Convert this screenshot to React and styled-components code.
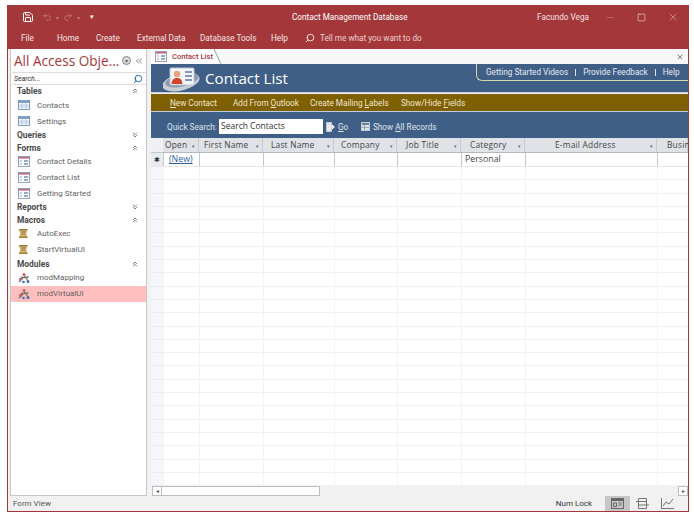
import React from "react";
import styled, { createGlobalStyle } from "styled-components";
import { Minus, Square, X, Redo2, Undo2, Search, ChevronsDown, ChevronsUp, ChevronsLeft, Save } from "lucide-react";

const columns = [
  { name: "Open", width: 36, left: 2 },
  { name: "First Name", width: 64, left: 5 },
  { name: "Last Name", width: 71, left: 8 },
  { name: "Company", width: 63, left: 7 },
  { name: "Job Title", width: 64, left: 9 },
  { name: "Category", width: 64, left: 9 },
  { name: "E-mail Address", width: 132, left: 30 },
  { name: "Busin", width: 31, left: 10, cut: true },
];

const groups = [
  { title: "Tables", open: true, icon: "table", items: ["Contacts", "Settings"] },
  { title: "Queries" },
  { title: "Forms", open: true, icon: "form", items: ["Contact Details", "Contact List", "Getting Started"] },
  { title: "Reports" },
  { title: "Macros", open: true, icon: "macro", items: ["AutoExec", "StartVirtualUI"] },
  { title: "Modules", open: true, icon: "module", items: ["modMapping", "modVirtualUI"] },
];

const ObjectIcon = ({ type }) => {
  if (type === "table") {
    return (
      <svg width="12" height="10" viewBox="0 0 12 10">
        <rect x="0.5" y="0.5" width="11" height="9" fill="#fff" stroke="#7f9cbf" />
        <rect x="1" y="1" width="10" height="2" fill="#7fa2cc" />
        <path d="M1 5h10M1 7h10M4 3v6M8 3v6" stroke="#a3bbd6" strokeWidth="0.8" />
      </svg>
    );
  }
  if (type === "form") {
    return (
      <svg width="12" height="11" viewBox="0 0 12 11">
        <rect x="0.5" y="0.5" width="11" height="10" fill="#fff" stroke="#9a9cb0" />
        <rect x="1" y="1" width="10" height="1.6" fill="#c46a8c" />
        <path d="M2 5h2M2 8h2" stroke="#8aa5c4" strokeWidth="1.2" />
        <rect x="6" y="4" width="4" height="2" fill="#8fabcb" />
        <rect x="6" y="7" width="4" height="2" fill="#8fabcb" />
      </svg>
    );
  }
  if (type === "macro") {
    return (
      <svg width="11" height="11" viewBox="0 0 11 11">
        <path d="M1 1h8.500l-1 4.500 1 4.500H1l1-4.500z" fill="#d4b271" />
        <path d="M1 1h8.500v1.500H1zM1 8.500h8.500V10H1z" fill="#a37f3e" />
        <path d="M3.500 4h4M3.500 6h3.500" stroke="#8c6c34" strokeWidth="0.8" />
      </svg>
    );
  }
  return (
    <svg width="12" height="12" viewBox="0 0 12 12">
      <path d="M1 10l4-4M6 3l4 6M3 5l6 1" stroke="#666" strokeWidth="1.1" fill="none" />
      <circle cx="6" cy="2.500" r="1.500" fill="#c9625f" />
      <circle cx="2.500" cy="7" r="1.500" fill="#c9625f" />
      <circle cx="10" cy="9.500" r="1.500" fill="#3f74b5" />
      <circle cx="5.500" cy="10" r="1.300" fill="#3f74b5" />
      <circle cx="9.500" cy="5" r="1.200" fill="#888" />
    </svg>
  );
};

const ContactLogo = () => (
  <svg width="38" height="25" viewBox="0 0 38 25">
    <ellipse cx="18" cy="15" rx="19" ry="8.500" transform="rotate(-14 18 15)" fill="#c9ced6" />
    <ellipse cx="19" cy="13" rx="17" ry="6.500" transform="rotate(-14 19 13)" fill="#8d99aa" />
    <rect x="7" y="1" width="24" height="17" rx="1" fill="#f4f6fa" stroke="#b9c4d4" />
    <circle cx="14" cy="7" r="3.200" fill="#e8a27c" />
    <path d="M8.500 17c.4-4.500 2.600-6 5.500-6s5.100 1.500 5.500 6z" fill="#d2452c" />
    <path d="M22 5h7M22 9h7M22 13h7" stroke="#5a7aa3" strokeWidth="1.500" />
  </svg>
);

const GoIcon = () => (
  <svg width="9" height="10" viewBox="0 0 9 10">
    <path d="M.5.500h5v9h-5z" fill="#e4e7ec" stroke="#c3c9d2" />
    <path d="M3 5h5M6 3l2 2-2 2" fill="none" stroke="#fff" strokeWidth="1.100" />
  </svg>
);

const RecordsIcon = () => (
  <svg width="9" height="9" viewBox="0 0 9 9">
    <rect x="0.5" y="0.500" width="8" height="8" fill="#dfe3e9" stroke="#c3c9d2" />
    <rect x="1" y="1" width="7" height="2" fill="#6f7f94" />
    <path d="M3.500 3v5M1 5.500h7" stroke="#7f8ea3" strokeWidth="0.7" />
  </svg>
);

export default function App() {
  return (
    <>
      <GlobalStyle />
      <Window>
        <TitleBar>
          <QuickAccess>
            <Save size={12} strokeWidth={2} color="#fff" />
            <Undo size={10} color="#c2787a" />
            <Faded>▾</Faded>
            <Redo2 size={10} color="#c2787a" />
            <Faded>▾</Faded>
            <Customize>▾</Customize>
          </QuickAccess>
          <DocTitle>Contact Management Database</DocTitle>
          <UserName>Facundo Vega</UserName>
          <WindowButtons>
            <Minus size={11} strokeWidth={1} color="#d9a9aa" />
            <Square size={9} strokeWidth={1.3} color="#fff" />
            <X size={12} strokeWidth={1} color="#ecd6d6" />
          </WindowButtons>
        </TitleBar>
        <MenuBar>
          <MenuItem $w={36}>File</MenuItem>
          <MenuItem $w={39}>Home</MenuItem>
          <MenuItem $w={41}>Create</MenuItem>
          <MenuItem $w={63}>External Data</MenuItem>
          <MenuItem $w={71}>Database Tools</MenuItem>
          <MenuItem $w={34}>Help</MenuItem>
          <TellMe>
            <Search size={10} color="#fff" style={{ transform: "scaleX(-1)" }} />
            Tell me what you want to do
          </TellMe>
        </MenuBar>
        <Body>
          <NavPane>
            <NavHeader>
              <NavTitle>All Access Obje...</NavTitle>
              <NavMenuDot>▾</NavMenuDot>
              <ChevronsLeft size={10} strokeWidth={1.6} color="#444" />
            </NavHeader>
            <NavSearch>
              <SearchHint>Search...</SearchHint>
              <Search size={10} strokeWidth={2.4} color="#2b6cb0" style={{ transform: "scaleX(-1)" }} />
            </NavSearch>
            {groups.map((group) => (
              <div key={group.title}>
                <GroupHead>
                  {group.title}
                  {group.open ? <ChevronsUp size={8} color="#444" /> : <ChevronsDown size={8} color="#444" />}
                </GroupHead>
                {group.items &&
                  group.items.map((item) => (
                    <NavItem key={item} $active={item === "modVirtualUI"}>
                      <IconSlot>
                        <ObjectIcon type={group.icon} />
                      </IconSlot>
                      {item}
                    </NavItem>
                  ))}
              </div>
            ))}
          </NavPane>
          <Workspace>
            <TabStrip>
              <Tab>
                <ObjectIcon type="form" />
                <TabLabel>Contact List</TabLabel>
              </Tab>
              <X size={8} strokeWidth={2} color="#444" />
            </TabStrip>
            <FormHeader>
              <ContactLogo />
              <FormTitle>Contact List</FormTitle>
              <HeaderLinks>
                <span>Getting Started Videos</span>
                <LinkBar />
                <span>Provide Feedback</span>
                <LinkBar />
                <span>Help</span>
              </HeaderLinks>
            </FormHeader>
            <ActionBar>
              <ActionLink $w={63}><u>N</u>ew Contact</ActionLink>
              <ActionLink $w={77}>Add From <u>O</u>utlook</ActionLink>
              <ActionLink $w={91}>Create Mailing <u>L</u>abels</ActionLink>
              <ActionLink>Show/Hide <u>F</u>ields</ActionLink>
            </ActionBar>
            <SearchBar>
              <QuickLabel>Quick Search:</QuickLabel>
              <QuickInput>Search Contacts</QuickInput>
              <SearchAction $w={35}>
                <GoIcon />
                <span><u>G</u>o</span>
              </SearchAction>
              <SearchAction>
                <RecordsIcon />
                <span>Show <u>A</u>ll Records</span>
              </SearchAction>
            </SearchBar>
            <Sheet>
              <SheetRow>
                <HeadSelector />
                {columns.map((col) => (
                  <HeadCell key={col.name} $w={col.width} $left={col.left}>
                    {col.name}
                    {!col.cut && <HeadArrow>▾</HeadArrow>}
                  </HeadCell>
                ))}
              </SheetRow>
              <SheetRow>
                <RowSelector>✱</RowSelector>
                {columns.map((col) => (
                  <NewCell key={col.name} $w={col.width}>
                    {col.name === "Open" && <NewLink>(New)</NewLink>}
                    {col.name === "Category" && "Personal"}
                  </NewCell>
                ))}
              </SheetRow>
              <RowGap />
              {Array.from({ length: 24 }, (_, i) => (
                <SheetRow key={i}>
                  <BlankSelector />
                  {columns.map((col) => (
                    <BlankCell key={col.name} $w={col.width} />
                  ))}
                </SheetRow>
              ))}
            </Sheet>
            <ScrollBar>
              <ScrollButton>◂</ScrollButton>
              <ScrollThumb />
              <ScrollTrack />
              <ScrollButton>▸</ScrollButton>
            </ScrollBar>
          </Workspace>
        </Body>
        <StatusBar>
          <span>Form View</span>
          <NumLock>Num Lock</NumLock>
          <ViewButton $active>
            <svg width="13" height="11" viewBox="0 0 13 11">
              <rect x="0.5" y="0.5" width="12" height="10" fill="none" stroke="#666" />
              <rect x="0.5" y="0.5" width="12" height="2.500" fill="#666" />
              <path d="M2.500 5h3v3.500h-3zM7.500 5h3M7.500 7h3" fill="none" stroke="#666" />
            </svg>
          </ViewButton>
          <ViewButton>
            <svg width="13" height="11" viewBox="0 0 13 11">
              <path d="M2.500.5h8v10h-8zM2.500 3.500h8M2.500 7h8M0 3.500h2.500M10.500 7H13" fill="none" stroke="#777" />
            </svg>
          </ViewButton>
          <ViewButton>
            <svg width="13" height="11" viewBox="0 0 13 11">
              <path d="M.5 0v10.500H13M2 8l3-4 3 2 4-5" fill="none" stroke="#777" />
            </svg>
          </ViewButton>
        </StatusBar>
      </Window>
    </>
  );
}

const chrome = `"Roboto", "Open Sans", sans-serif`;

const GlobalStyle = createGlobalStyle`
  html, body {
    margin: 0;
    background: #fff;
    font-family: "Open Sans", "Noto Sans", sans-serif;
  }
`;

const Window = styled.div`
  box-sizing: border-box;
  width: 682px;
  height: 507px;
  margin: 5px 0 0 7px;
  border: 1px solid #a4373a;
  border-top: 0;
  background: #f1f1f1;
  display: flex;
  flex-direction: column;
  overflow: hidden;
`;

const TitleBar = styled.div`
  height: 24px;
  flex: none;
  background: #a4373a;
  color: #fff;
  display: flex;
  align-items: center;
  position: relative;
  font-family: ${chrome};
  font-size: 8.200px;
`;

const QuickAccess = styled.div`
  display: flex;
  align-items: center;
  gap: 4px;
  padding-left: 14px;
`;

const Undo = styled(Undo2)`
  margin-left: 4px;
`;

const Faded = styled.span`
  color: #c2787a;
  font-size: 6px;
`;

const Customize = styled.span`
  color: #fff;
  font-size: 7px;
  margin-left: 6px;
`;

const DocTitle = styled.div`
  position: absolute;
  left: 284px;
  top: 7px;
  white-space: nowrap;
`;

const UserName = styled.div`
  margin-left: auto;
  margin-right: 16px;
  color: #f3e3e3;
`;

const WindowButtons = styled.div`
  display: flex;
  align-items: center;
  gap: 21px;
  padding-right: 9px;
`;

const MenuBar = styled.div`
  height: 20px;
  flex: none;
  box-sizing: border-box;
  padding: 0 0 2px 13px;
  background: #a4373a;
  color: #f5e6e6;
  display: flex;
  align-items: center;
  font-family: ${chrome};
  font-size: 8.200px;
`;

const MenuItem = styled.div`
  width: ${(p) => p.$w}px;
  white-space: nowrap;
`;

const TellMe = styled.div`
  display: flex;
  align-items: center;
  gap: 5px;
  color: #ecd0d0;
`;

const Body = styled.div`
  flex: 1;
  min-height: 0;
  display: flex;
  padding-left: 2px;
  gap: 4px;
`;

const NavPane = styled.div`
  box-sizing: border-box;
  width: 137px;
  flex: none;
  background: #fff;
  border: 1px solid #c6c6c6;
  border-top: 0;
  font-family: ${chrome};
  font-size: 8px;
  color: #5f5f5f;
`;

const NavHeader = styled.div`
  height: 23px;
  display: flex;
  align-items: center;
  padding: 0 2px 0 3px;
`;

const NavTitle = styled.div`
  color: #a4373a;
  font-family: "Open Sans", sans-serif;
  font-size: 13.600px;
  white-space: nowrap;
  flex: 1;
`;

const NavMenuDot = styled.div`
  width: 9px;
  height: 9px;
  border-radius: 50%;
  border: 1px solid #888;
  background: #ddd;
  font-size: 6px;
  line-height: 8px;
  text-align: center;
  box-sizing: border-box;
  margin-right: 3px;
`;

const NavSearch = styled.div`
  height: 13px;
  box-sizing: border-box;
  border-top: 1px solid #dcdcdc;
  border-bottom: 1px solid #dcdcdc;
  margin-left: 1px;
  display: flex;
  align-items: center;
  justify-content: space-between;
  padding: 0 3px 0 2px;
`;

const SearchHint = styled.span`
  font-style: italic;
  color: #333;
  font-size: 7px;
`;

const GroupHead = styled.div`
  height: 12.400px;
  display: flex;
  align-items: center;
  justify-content: space-between;
  padding: 0 7px 0 6px;
  font-weight: 700;
  font-size: 8.400px;
  color: #4a4a4a;
`;

const NavItem = styled.div`
  height: 15.800px;
  display: flex;
  align-items: center;
  gap: 7px;
  padding-left: 7px;
  background: ${(p) => (p.$active ? "#ffbfbf" : "transparent")};
  white-space: nowrap;
`;

const IconSlot = styled.span`
  width: 12px;
  display: flex;
  flex: none;
`;

const Workspace = styled.div`
  flex: 1;
  min-width: 0;
  display: flex;
  flex-direction: column;
`;

const TabStrip = styled.div`
  height: 15px;
  flex: none;
  display: flex;
  align-items: center;
  justify-content: space-between;
  padding-right: 4px;
  background: #f7f7f7;
`;

const Tab = styled.div`
  height: 100%;
  width: 63px;
  box-sizing: border-box;
  position: relative;
  display: flex;
  align-items: center;
  gap: 5px;
  padding-left: 4px;
  background: #fff;

  &::after {
    content: "";
    position: absolute;
    right: -4px;
    top: 0;
    width: 7px;
    height: 100%;
    background: #fff;
    border-right: 1px solid #9f9f9f;
    transform: skewX(25deg);
  }
`;

const TabLabel = styled.span`
  position: relative;
  z-index: 1;
  color: #a4373a;
  font-family: ${chrome};
  font-size: 7.600px;
  font-weight: 500;
  white-space: nowrap;
`;

const FormHeader = styled.div`
  height: 29px;
  flex: none;
  box-sizing: border-box;
  background: #3f5f87;
  border-bottom: 1px solid #c4cedb;
  display: flex;
  align-items: flex-end;
  gap: 4px;
  padding-left: 12px;
`;

const FormTitle = styled.div`
  color: #fff;
  font-size: 15.200px;
  line-height: 27px;
  white-space: nowrap;
`;

const HeaderLinks = styled.div`
  align-self: flex-start;
  margin-left: auto;
  width: 212px;
  height: 17px;
  box-sizing: border-box;
  border-left: 1px solid #d6d8a6;
  border-bottom: 1px solid #d6d8a6;
  border-bottom-left-radius: 6px;
  display: flex;
  align-items: center;
  gap: 7px;
  padding-left: 9px;
  color: #e6eaf0;
  font-family: ${chrome};
  font-size: 8.200px;
  white-space: nowrap;
`;

const LinkBar = styled.i`
  width: 1px;
  height: 7px;
  background: #dfe4ea;
`;

const ActionBar = styled.div`
  height: 18px;
  flex: none;
  box-sizing: border-box;
  margin-top: 1px;
  background: #7f6000;
  border-bottom: 1px solid #c4cedb;
  display: flex;
  align-items: center;
  padding-left: 19px;
  color: #efe6d2;
  font-family: ${chrome};
  font-size: 8.200px;
  white-space: nowrap;
`;

const ActionLink = styled.span`
  width: ${(p) => (p.$w ? `${p.$w}px` : "auto")};
`;

const SearchBar = styled.div`
  height: 26px;
  flex: none;
  box-sizing: border-box;
  padding: 3px 0 0 16px;
  background: #3f5f87;
  display: flex;
  align-items: center;
  color: #dfe5ec;
  font-family: ${chrome};
  font-size: 8.200px;
  white-space: nowrap;
`;

const QuickLabel = styled.span`
  width: 52px;
`;

const QuickInput = styled.div`
  width: 104px;
  height: 15px;
  box-sizing: border-box;
  background: #fff;
  color: #333;
  font-family: "Open Sans", sans-serif;
  font-size: 8.500px;
  line-height: 14px;
  padding-left: 2px;
`;

const SearchAction = styled.div`
  display: flex;
  align-items: center;
  gap: 3px;
  margin-left: 3px;
  width: ${(p) => (p.$w ? `${p.$w}px` : "auto")};
  &:last-child { margin-left: 0; }
`;

const Sheet = styled.div`
  flex: 1;
  min-height: 0;
  overflow: hidden;
  background: #fff;
`;

const SheetRow = styled.div`
  display: flex;
  width: max-content;
`;

const HeadSelector = styled.div`
  width: 12px;
  height: 14px;
  flex: none;
  background: #eef0f3;
  border-bottom: 1px solid #c3c7cc;
`;

const HeadCell = styled.div`
  height: 14px;
  flex: none;
  box-sizing: content-box;
  background: #dfe3e8;
  border-bottom: 1px solid #b5b9bf;
  box-shadow: inset -1px 0 0 #c8ccd2;
  display: flex;
  align-items: center;
  padding-left: ${(p) => p.$left}px;
  width: ${(p) => p.$w - p.$left}px;
  font-size: 8.400px;
  line-height: 12px;
  color: #444;
  letter-spacing: 0.2px;
  position: relative;
  white-space: nowrap;
`;

const HeadArrow = styled.span`
  position: absolute;
  right: 4px;
  top: 2px;
  font-size: 5px;
  color: #666;
`;

const RowSelector = styled.div`
  width: 12px;
  height: 13px;
  flex: none;
  background: #e8ebef;
  color: #333;
  font-size: 7px;
  line-height: 13px;
  text-align: center;
`;

const NewCell = styled.div`
  width: ${(p) => p.$w}px;
  height: 13px;
  flex: none;
  box-sizing: border-box;
  border-left: 1px solid #c4c4c4;
  padding-left: 3px;
  font-size: 8.800px;
  line-height: 13px;
  color: #444;
`;

const NewLink = styled.span`
  color: #2f5f9f;
  text-decoration: underline;
  padding-left: 2px;
`;

const RowGap = styled.div`
  height: 1px;
  background: #e6e6e6;
`;

const BlankSelector = styled.div`
  width: 12px;
  height: 13.300px;
  flex: none;
  box-sizing: border-box;
  background: #f4f6fb;
  border-bottom: 1px dotted #dde0e5;
`;

const BlankCell = styled.div`
  width: ${(p) => p.$w}px;
  height: 13.300px;
  flex: none;
  box-sizing: border-box;
  border-left: 1px solid #f3f3f3;
  border-bottom: 1px solid #f1f1f1;
`;

const ScrollBar = styled.div`
  height: 10px;
  flex: none;
  background: #f1f1f1;
  display: flex;
  align-items: stretch;
  padding-left: 1px;
`;

const ScrollButton = styled.div`
  width: 10px;
  box-sizing: border-box;
  border: 1px solid #bdbdbd;
  background: #fff;
  color: #555;
  font-size: 6px;
  line-height: 8px;
  text-align: center;
`;

const ScrollThumb = styled.div`
  width: 158px;
  box-sizing: border-box;
  border: 1px solid #bdbdbd;
  border-left: 0;
  background: #fff;
`;

const ScrollTrack = styled.div`
  flex: 1;
`;

const StatusBar = styled.div`
  height: 15px;
  flex: none;
  display: flex;
  align-items: center;
  padding-left: 5px;
  color: #555;
  font-family: ${chrome};
  font-size: 8px;
`;

const NumLock = styled.span`
  margin-left: auto;
  margin-right: 13px;
  color: #333;
`;

const ViewButton = styled.div`
  width: 25px;
  height: 100%;
  display: flex;
  align-items: center;
  justify-content: center;
  background: ${(p) => (p.$active ? "#c6c6c6" : "transparent")};

  &:last-child { margin-right: 8px; }
`;
